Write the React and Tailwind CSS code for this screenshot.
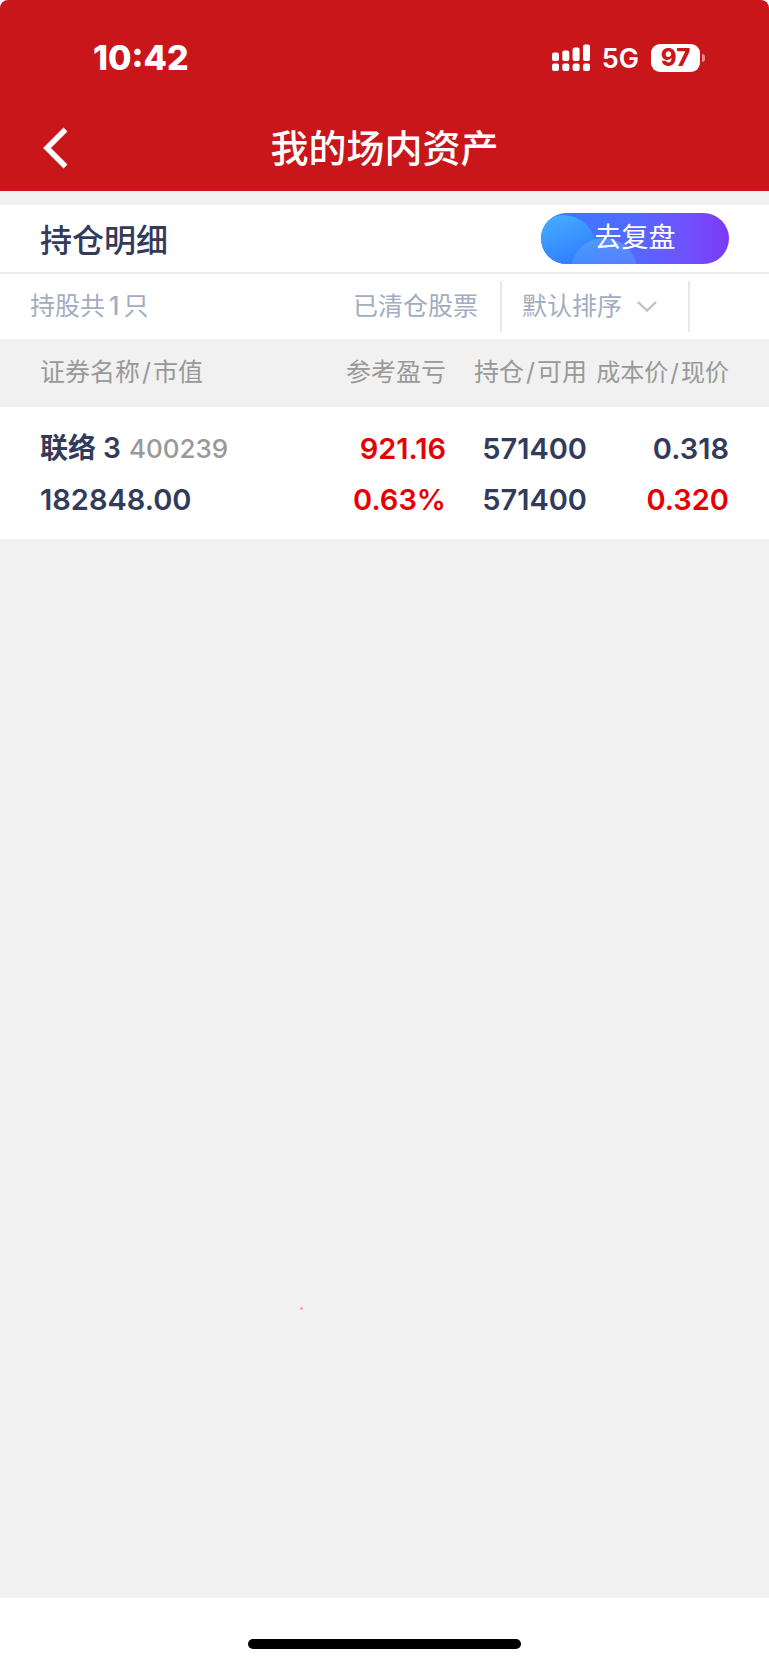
import { useState } from 'react'

const holdings = [
  {
    name: '联络 3',
    code: '400239',
    marketValue: '182848.00',
    profit: '921.16',
    profitRate: '0.63%',
    position: '571400',
    available: '571400',
    cost: '0.318',
    price: '0.320'
  }
]

const SignalIcon = () => (
  <svg width="38" height="28" viewBox="0 0 38 28" fill="currentColor" aria-hidden="true">
    <rect x="0" y="8.500" width="7" height="8.500" rx="2" />
    <rect x="10.300" y="6.500" width="7" height="10.500" rx="2" />
    <rect x="20.600" y="3.500" width="7" height="13.500" rx="2" />
    <rect x="31" y="0.500" width="7" height="16.500" rx="2" />
    <rect x="0" y="19.500" width="7" height="7.500" rx="2" />
    <rect x="10.300" y="19.500" width="7" height="7.500" rx="2" />
    <rect x="20.600" y="19.500" width="7" height="7.500" rx="2" />
    <rect x="31" y="19.500" width="7" height="7.500" rx="2" />
  </svg>
)

const StatusBar = () => (
  <div className="flex h-[105px] items-center justify-between pt-2.5 pr-16 pl-[93px]">
    <span className="text-[34px] font-extrabold">10:42</span>
    <div className="flex items-center">
      <SignalIcon />
      <span className="ml-3 pt-1 text-[27px] font-semibold">5G</span>
      <span className="ml-3 flex h-7 w-[49px] items-center justify-center rounded-[9px] bg-white text-2xl font-extrabold text-[#c8161b]">
        97
      </span>
      <span className="ml-0.5 h-2 w-[3px] rounded-r-full bg-white/50" />
    </div>
  </div>
)

const ReviewButton = () => (
  <button
    type="button"
    className="relative flex h-[51px] w-[188px] items-center justify-center overflow-hidden rounded-full bg-linear-to-r from-[#2f7bff] via-[#5468ff] to-[#7d38f8] text-[27px] text-white"
  >
    <svg className="absolute inset-0 h-full w-full" viewBox="0 0 188 51" aria-hidden="true">
      <defs>
        <linearGradient id="bubbleLarge" x1="0.3" y1="0" x2="0.6" y2="0.8">
          <stop offset="0" stopColor="#45adff" />
          <stop offset="1" stopColor="#2f7bff" />
        </linearGradient>
        <linearGradient id="bubbleSmall" x1="0" y1="0" x2="0" y2="1">
          <stop offset="0" stopColor="#5aa0ff" stopOpacity="0.75" />
          <stop offset="1" stopColor="#5a8cff" stopOpacity="0.1" />
        </linearGradient>
      </defs>
      <circle cx="22" cy="35" r="33" fill="url(#bubbleLarge)" />
      <circle cx="63" cy="58" r="33" fill="url(#bubbleSmall)" />
    </svg>
    <span className="relative">去复盘</span>
  </button>
)

const App = () => {
  const [sort, setSort] = useState('default')

  return (
    <div className="flex min-h-screen flex-col bg-white font-['Inter','Noto_Sans_CJK_SC',sans-serif]">
      <header className="rounded-t-lg bg-[#c8161b] text-white">
        <StatusBar />
        <div className="grid h-[86px] grid-cols-[1fr_auto_1fr] items-center px-10">
          <button type="button" aria-label="返回" className="justify-self-start">
            <svg width="30" height="44" viewBox="0 0 30 44" fill="none" stroke="currentColor" strokeWidth="5.5">
              <path d="M25.5 3.5 7 22l18.5 18.5" />
            </svg>
          </button>
          <h1 className="text-[38px] font-medium">我的场内资产</h1>
        </div>
      </header>

      <main className="flex flex-1 flex-col bg-[#f1f1f1] pt-3.5">
        {/* Section title */}
        <div className="flex h-[69px] items-center justify-between border-b-2 border-[#e9eef5] bg-white px-10">
          <h2 className="pt-1 text-[32px] font-medium text-[#333b5a]">持仓明细</h2>
          <ReviewButton />
        </div>

        {/* Filters */}
        <div className="flex h-[65px] items-center bg-white pr-[79px] pl-[30px] text-[25px] text-[#a2acc3]">
          <p className="mr-auto">
            持股共<span className="mx-1 font-medium">1</span>只
          </p>
          <button type="button" className="mr-[22px]">已清仓股票</button>
          <div className="grid h-[51px] w-[190px] items-center border-x-2 border-[#e3e8f1]">
            <select
              aria-label="排序方式"
              value={sort}
              onChange={(e) => setSort(e.target.value)}
              className="col-start-1 row-start-1 w-full appearance-none bg-transparent pl-5"
            >
              <option value="default">默认排序</option>
            </select>
            <svg
              className="pointer-events-none col-start-1 row-start-1 mr-[30px] justify-self-end"
              width="22"
              height="12"
              viewBox="0 0 22 12"
              fill="none"
              stroke="#c0c1c9"
              strokeWidth="2.4"
              aria-hidden="true"
            >
              <path d="m2.500 1.500 8.500 8 8.500-8" strokeLinecap="round" />
            </svg>
          </div>
        </div>

        {/* Holdings */}
        <table className="w-full table-fixed text-right whitespace-nowrap">
          <thead>
            <tr className="h-[68px] text-[25px] text-[#999999]">
              <th className="pl-10 text-left font-normal">证券名称<span className="mx-0.5">/</span>市值</th>
              <th className="w-[140px] font-normal">参考盈亏</th>
              <th className="w-[141px] font-normal">持仓<span className="mx-0.5">/</span>可用</th>
              <th className="w-[182px] pr-10 text-2xl font-normal">成本价<span className="mx-0.5">/</span>现价</th>
            </tr>
          </thead>
          <tbody>
            {holdings.map((item) => (
              <tr key={item.code} className="bg-white align-top text-[29px] leading-[51px] font-semibold text-[#333b5a]">
                <td className="pt-4 pb-3.5 pl-10 text-left">
                  <div className="flex">
                    <span className="text-[28px]">{item.name}</span>
                    <span className="ml-2 text-[26px] font-medium text-[#999999]">{item.code}</span>
                  </div>
                  <div>{item.marketValue}</div>
                </td>
                <td className="pt-4 text-[#e60000]">
                  <div>{item.profit}</div>
                  <div>{item.profitRate}</div>
                </td>
                <td className="pt-4">
                  <div>{item.position}</div>
                  <div>{item.available}</div>
                </td>
                <td className="pt-4 pr-10">
                  <div>{item.cost}</div>
                  <div className="text-[#e60000]">{item.price}</div>
                </td>
              </tr>
            ))}
          </tbody>
        </table>
        <div className="mt-192 ml-[39%] h-[3px] w-[3px] rounded-full bg-[#f5a3a3]" />
      </main>

      <footer className="flex h-[67px] items-end justify-center bg-white pb-4">
        <div className="h-2.5 w-[273px] rounded-full bg-black" />
      </footer>
    </div>
  )
}

export default App
